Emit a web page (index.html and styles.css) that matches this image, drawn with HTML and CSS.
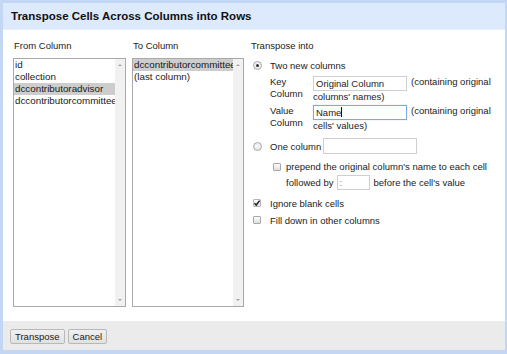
FILE: index.html
```html
<!DOCTYPE html>
<html>
<head>
<meta charset="utf-8">
<title>Transpose Cells Across Columns into Rows</title>
<link rel="stylesheet" href="styles.css">
</head>
<body>
<div class="dialog">
  <div class="header"><h1>Transpose Cells Across Columns into Rows</h1></div>
  <div class="body">
    <div class="col col-from">
      <div class="label">From Column</div>
      <div class="listbox">
        <div class="items">
          <div class="item">id</div>
          <div class="item">collection</div>
          <div class="item sel">dccontributoradvisor</div>
          <div class="item">dccontributorcommittee</div>
        </div>
        <div class="scroll"><span class="arr up"></span><span class="arr down"></span></div>
      </div>
    </div>
    <div class="col col-to">
      <div class="label">To Column</div>
      <div class="listbox">
        <div class="items">
          <div class="item sel">dccontributorcommittee</div>
          <div class="item">(last column)</div>
        </div>
        <div class="scroll"><span class="arr up"></span><span class="arr down"></span></div>
      </div>
    </div>
    <div class="col col-into">
      <div class="label">Transpose into</div>
      <div class="opt opt-two"><span class="radio checked"></span><span class="opt-text">Two new columns</span></div>
      <div class="kv">
        <div class="kv-label">Key<br>Column</div>
        <div class="kv-text">
          <div class="kv-row"><span class="input">Original Column</span><span class="kv-note">(containing original</span></div>
          <div class="kv-wrap">columns' names)</div>
        </div>
        <div class="kv-label">Value<br>Column</div>
        <div class="kv-text">
          <div class="kv-row"><span class="input focus">Name<span class="caret"></span></span><span class="kv-note">(containing original</span></div>
          <div class="kv-wrap">cells' values)</div>
        </div>
      </div>
      <div class="opt opt-one"><span class="radio"></span><span class="opt-text">One column</span><span class="input wide"></span></div>
      <div class="prepend">
        <span class="check"></span>
        <div class="prepend-text">
          <div class="pline">prepend the original column's name to each cell</div>
          <div class="pline2"><span>followed by</span><span class="input sep">:</span><span>before the cell's value</span></div>
        </div>
      </div>
      <div class="opt opt-ignore"><span class="check checked"><svg width="8" height="8" viewBox="0 0 8 8"><path d="M1.5 4.2 L3.2 6 L6.6 1.6" fill="none" stroke="#222" stroke-width="1.5"/></svg></span><span class="opt-text">Ignore blank cells</span></div>
      <div class="opt opt-fill"><span class="check"></span><span class="opt-text">Fill down in other columns</span></div>
    </div>
  </div>
  <div class="footer">
    <span class="button">Transpose</span>
    <span class="button">Cancel</span>
  </div>
</div>
</body>
</html>
```
FILE: styles.css
```css
* { box-sizing: border-box; }
html, body { margin: 0; padding: 0; }
body {
  font-family: "Liberation Sans", Arial, sans-serif;
  font-size: 9.5px;
  color: #222;
  width: 507px;
  height: 354px;
  overflow: hidden;
  background: #fff;
}
.dialog {
  width: 507px;
  height: 354px;
  border-style: solid;
  border-color: #c3d7f4;
  border-width: 3px 2px 4px 3px;
  display: flex;
  flex-direction: column;
  background: #fff;
}
.header {
  height: 27px;
  background: #dde9fc;
  display: flex;
  align-items: center;
  padding-left: 8px;
  border-bottom: 1px solid #e9f0fb;
}
.header h1 {
  margin: 0;
  font-size: 11.5px;
  font-weight: bold;
  color: #111;
}
.body {
  flex: 1;
  display: flex;
  padding: 10px 10px 0 10px;
}
.col-from { width: 113px; }
.col-to { width: 112px; margin-left: 6px; }
.col-into { flex: 1; margin-left: 7px; }
.label { line-height: 12px; height: 12px; padding-left: 1px; }
.col-into .label { padding-left: 0; }
.listbox {
  margin-top: 6px;
  height: 249px;
  border: 1px solid #a9a9a9;
  display: flex;
}
.items { flex: 1; overflow: hidden; min-width: 0; }
.item {
  font-size: 9.8px;
  line-height: 12px;
  height: 12px;
  padding-left: 1px;
  white-space: nowrap;
  overflow: hidden;
  color: #1a1a1a;
}
.item.sel { background: #cdcdcd; }
.scroll {
  width: 10px;
  background: #f1f1f1;
  display: flex;
  flex-direction: column;
  justify-content: space-between;
  align-items: center;
  padding: 5px 0 5px;
}
.arr { width: 0; height: 0; border-left: 2px solid transparent; border-right: 2px solid transparent; }
.arr.up { border-bottom: 2px solid #a3a3a3; }
.arr.down { border-top: 2px solid #a3a3a3; }

.opt { display: flex; align-items: center; }
.opt-two { margin-top: 7px; height: 12px; }
.radio {
  width: 9px;
  height: 9px;
  margin-left: 2px;
  margin-right: 8px;
  border-radius: 50%;
  border: 1px solid #a8a8a8;
  background: radial-gradient(circle at 50% 40%, #fbfbfb, #dedede);
  display: flex;
  align-items: center;
  justify-content: center;
  flex: none;
}
.radio.checked::after {
  content: "";
  width: 3px;
  height: 3px;
  border-radius: 50%;
  background: #333;
}
.kv {
  margin-left: 19px;
  margin-top: 5px;
  display: grid;
  grid-template-columns: 43px 1fr;
  row-gap: 2px;
}
.kv-label { line-height: 12px; }
.kv-row { display: flex; align-items: flex-start; height: 15px; }
.kv-note { line-height: 12px; }
.kv-wrap { line-height: 12px; }
.input {
  display: inline-block;
  width: 94px;
  height: 15px;
  border: 1px solid #cfcfcf;
  background: #fff;
  padding: 0 2px;
  line-height: 13px;
  margin-right: 4px;
  color: #222;
  white-space: nowrap;
  flex: none;
}
.input.focus { border-color: #7fa7e0; box-shadow: 0 0 1px #b8cff0; }
.caret {
  display: inline-block;
  width: 1px;
  height: 10px;
  background: #111;
  vertical-align: -1px;
}
.opt-one { margin-top: 6px; height: 16px; }
.input.wide { margin-left: 2px; height: 16px; margin-right: 0; }
.prepend {
  margin-left: 22px;
  margin-top: 7px;
  display: flex;
  align-items: flex-start;
}
.check {
  width: 8px;
  height: 8px;
  border: 1px solid #a8a8a8;
  border-radius: 1px;
  background: linear-gradient(#fdfdfd, #dfdfdf);
  flex: none;
  display: flex;
  align-items: center;
  justify-content: center;
}
.check svg { display: block; flex: none; }
.check.checked { border-color: #b5b5b5; }
.prepend .check { margin-top: 2px; margin-right: 5px; }
.pline { line-height: 12px; }
.pline2 { margin-top: 2px; height: 15px; display: flex; align-items: center; }
.input.sep { width: 33px; margin: 0 4px 0 3px; color: #888; line-height: 13px; }
.opt-ignore { margin-top: 7px; height: 12px; }
.opt-fill { margin-top: 5px; height: 12px; }
.opt-ignore .check, .opt-fill .check { margin-left: 2px; margin-right: 9px; }

.footer {
  height: 29px;
  background: #ebebeb;
  display: flex;
  align-items: flex-start;
  padding: 8px 7px 0;
  gap: 3px;
}
.button {
  height: 15px;
  line-height: 13px;
  padding: 0 4px;
  border: 1px solid #b8b8b8;
  border-radius: 2px;
  background: linear-gradient(#f0f0f0, #e1e1e1);
  color: #222;
}
```
